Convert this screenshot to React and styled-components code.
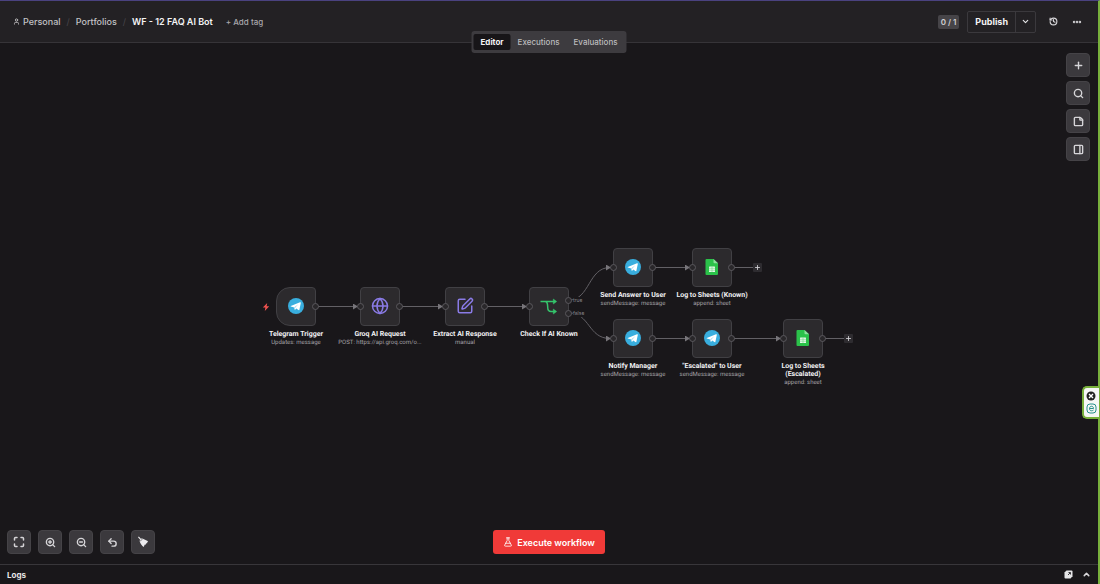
import React from "react";
import styled, { createGlobalStyle, css } from "styled-components";
import {
  ChevronDown, ChevronUp, Ellipsis, FlaskConical, Globe, History, Maximize, PanelRight,
  Plus, Search, SquarePen, StickyNote, Undo2, User, ZoomIn, ZoomOut,
} from "lucide-react";

const GlobalStyle = createGlobalStyle`
  * { box-sizing: border-box; }
  body { margin: 0; background: #19171a; }
  body, button { font-family: Inter, "Liberation Sans", sans-serif; }
  button { padding: 0; border: 0; background: none; color: inherit; cursor: pointer; }
  svg { display: block; flex: none; }
`;

const Page = styled.div`
  position: relative;
  display: flex;
  flex-direction: column;
  min-height: 100vh;
  border-top: 1px solid #4a4280;
  border-right: 2px solid #78b03c;
  background: #19171a;
  color: #e6e6e8;
`;

const Header = styled.header`
  position: relative;
  display: flex;
  align-items: center;
  justify-content: space-between;
  height: 42px;
  padding: 0 13px;
  background: #232124;
  border-bottom: 1px solid #363438;
`;

const Breadcrumbs = styled.nav`
  display: flex;
  align-items: center;
  gap: 6px;
  font-size: 9px;
  line-height: 12px;
  color: #48464b;
`;

const Crumb = styled.a`
  display: flex;
  align-items: center;
  gap: 3px;
  color: #c2c1c4;
  font-weight: 500;
  text-decoration: none;
`;

const Title = styled.h1`
  margin: 0;
  font-size: 9px;
  font-weight: 600;
  line-height: 12px;
  color: #f4f4f5;
`;

const AddTag = styled.button`
  margin-left: 7px;
  font-size: 8px;
  font-weight: 500;
  line-height: 12px;
  color: #a9a7ac;
`;

const HeaderActions = styled.div`
  display: flex;
  align-items: center;
  gap: 8px;
`;

const Counter = styled.span`
  padding: 0 3px;
  border-radius: 2px;
  background: #464448;
  font-size: 8px;
  font-weight: 600;
  line-height: 14px;
  color: #d0cfd2;
`;

const PublishGroup = styled.div`
  display: flex;
  height: 22px;
  margin-right: 1px;
  border: 1px solid #3b393d;
  border-radius: 2px;
`;

const PublishButton = styled.button`
  padding: 0 7px;
  font-size: 9px;
  font-weight: 700;
  color: #f4f4f5;
`;

const PublishMenu = styled.button`
  display: grid;
  place-items: center;
  width: 20px;
  border-left: 1px solid #3b393d;
`;

const PlainButton = styled.button`
  display: grid;
  place-items: center;
  width: 16px;
  height: 16px;
  color: #d8d7da;
`;

const Tabs = styled.div`
  position: absolute;
  top: 30px;
  left: 50%;
  z-index: 2;
  display: flex;
  padding: 3px 2px;
  border-radius: 3px;
  background: #3d3b3f;
  transform: translateX(-50%);
`;

const Tab = styled.button`
  height: 16px;
  padding: 0 7px;
  border-radius: 2px;
  font-size: 8px;
  font-weight: ${(p) => (p.$active ? 700 : 500)};
  line-height: 16px;
  color: ${(p) => (p.$active ? "#f4f4f5" : "#bcbbbe")};
  background: ${(p) => (p.$active ? "#171518" : "transparent")};
`;

const Canvas = styled.main`
  position: relative;
  display: flex;
  flex: 1;
  flex-direction: column;
  justify-content: space-between;
  min-height: 400px;
  overflow: hidden;
`;

const SquareButton = styled.button`
  display: grid;
  place-items: center;
  width: 24px;
  height: 24px;
  border: 1px solid #454347;
  border-radius: 4px;
  background: #3b393d;
  color: #d6d5d8;
`;

const SideTools = styled.div`
  position: relative;
  z-index: 1;
  display: flex;
  flex-direction: column;
  align-self: flex-end;
  gap: 4px;
  padding: 10px 8px 0 0;
`;

const BottomBar = styled.div`
  position: relative;
  z-index: 1;
  display: grid;
  grid-template-columns: 1fr auto 1fr;
  padding: 0 7px 10px;
`;

const ViewTools = styled.div`
  display: flex;
  gap: 7px;
`;

const ExecuteButton = styled.button`
  display: flex;
  align-items: center;
  gap: 4px;
  height: 24px;
  padding: 0 10px;
  border-radius: 3px;
  background: #f03a38;
  color: #fff;
  font-size: 9px;
  font-weight: 600;
`;

const Diagram = styled.div`
  position: absolute;
  top: 50%;
  left: 50%;
  width: 620px;
  height: 162px;
  transform: translate(-50%, -50%);
`;

const Wires = styled.svg`
  position: absolute;
  inset: 0;
  overflow: visible;
`;

const NodeBox = styled.div`
  position: absolute;
  left: ${(p) => p.$x}px;
  top: ${(p) => p.$y}px;
  display: grid;
  place-items: center;
  width: 40px;
  height: 39px;
  border: 1px solid #414044;
  border-radius: ${(p) => (p.$trigger ? "14px 4px 4px 14px" : "4px")};
  background: #2c2a2d;
`;

const NodeText = styled.div`
  position: absolute;
  top: 42px;
  left: 50%;
  width: ${(p) => (p.$narrow ? 56 : 84)}px;
  transform: translateX(-50%);
  font-family: Roboto, "Liberation Sans", sans-serif;
  text-align: center;
  text-rendering: geometricPrecision;
`;

const NodeName = styled.div`
  font-size: 7px;
  font-weight: 700;
  line-height: 8px;
  color: #f0f0f2;
`;

const NodeDetail = styled.div`
  font-size: 6px;
  line-height: 9px;
  color: #a3a1a6;
  white-space: nowrap;
`;

const Port = styled.span`
  position: absolute;
  top: ${(p) => p.$y}px;
  width: 7px;
  height: 7px;
  border: 1px solid #5a585d;
  border-radius: 50%;
  background: #29272a;
  ${(p) => (p.$side === "in" ? css`left: -4px;` : css`right: -4px;`)}
`;

const PortLabel = styled.span`
  position: absolute;
  left: 43px;
  top: ${(p) => p.$y}px;
  font-size: 5px;
  line-height: 7px;
  color: #88868b;
  background: #19171a;
`;

const AddNode = styled.button`
  position: absolute;
  left: ${(p) => p.$x}px;
  top: ${(p) => p.$y}px;
  display: grid;
  place-items: center;
  width: 9px;
  height: 9px;
  border-radius: 1px;
  background: #2e2c30;
  color: #d0cfd2;
`;

const TriggerMark = styled.svg`
  position: absolute;
  left: -15px;
  top: 15px;
`;

const LogsBar = styled.footer`
  display: flex;
  align-items: center;
  justify-content: space-between;
  height: 20px;
  padding: 0 4px 0 7px;
  border-top: 1px solid #38363a;
  font-size: 8px;
  font-weight: 700;
`;

const LogsActions = styled.div`
  display: flex;
  align-items: center;
  gap: 2px;
`;

const Widget = styled.aside`
  position: absolute;
  right: -1px;
  top: 385px;
  z-index: 3;
  display: flex;
  flex-direction: column;
  align-items: center;
  justify-content: space-around;
  width: 17px;
  height: 33px;
  padding: 2px 1px 2px 0;
  border: 2px solid #78b03c;
  border-right: 0;
  border-radius: 5px 0 0 5px;
  background: #f6f7f6;
`;

const TelegramIcon = () => (
  <svg width="16" height="16" viewBox="0 0 16 16" aria-hidden="true">
    <circle cx="8" cy="8" r="8" fill="#39aede" />
    <path d="M2.800 7.900 12 4.200c.6-.2 1 .1.800.8l-1.400 6.700c-.1.600-.6.700-1 .4L8.300 10.600l-1.100 1.100c-.3.300-.6.200-.6-.2L6.200 9.400 2.900 8.500c-.4-.1-.4-.4-.1-.6Z" fill="#fff" />
    <path d="m6.300 9.300 4-3-3.100 3.500-.4 1.500Z" fill="#9fd3ec" />
  </svg>
);

const SheetsIcon = () => (
  <svg width="14" height="18" viewBox="0 0 14 18" aria-hidden="true">
    <path d="M1.500 1h7L13 5.200V16a1 1 0 0 1-1 1H1.500a1 1 0 0 1-1-1V2a1 1 0 0 1 1-1Z" fill="#2bc24a" />
    <path d="M8.500 1 13 5.200H9.500a1 1 0 0 1-1-1Z" fill="#8fe09e" />
    <rect x="4" y="8.500" width="6" height="5.500" rx=".5" fill="#e9f9ec" />
    <path d="M4 10.300h6M4 12.200h6M7 8.500V14" stroke="#58cc70" strokeWidth=".5" />
  </svg>
);

const BranchIcon = () => (
  <svg width="18" height="18" viewBox="0 0 18 18" fill="none" stroke="#35c46c" strokeWidth="1.500" aria-hidden="true">
    <path d="M.5 4.500H15M5 4.500c3 0 2.500 3 2.700 6 .1 3 1 4 3.300 4h4" />
    <path d="m13.300 2 3.400 2.500L13.300 7ZM13.300 12l3.400 2.500-3.400 2.500Z" fill="#35c46c" strokeWidth=".5" />
  </svg>
);

const BroomIcon = () => (
  <svg width="12" height="12" viewBox="0 0 12 12" aria-hidden="true">
    <path d="M1 1.200 1.800.6l2.100 2.200c.7-.5 1.500-.4 2 0l5.300 2.500-1.100.9.400.7-1.500.5-.1 1.200-1.300.1-.8 2.300C4.800 9.700 3.300 7.700 2.700 5.500c-.1-.7.1-1.300.5-1.800Z" fill="#ecebee" />
    <path d="m3.100 5.100 2.500-2" stroke="#3b393d" strokeWidth=".6" />
  </svg>
);

const PopOutIcon = () => (
  <svg width="9" height="9" viewBox="0 0 9 9" aria-hidden="true">
    <path d="M2.500.5h5a1 1 0 0 1 1 1v4.700L6.500 8.500h-5a1 1 0 0 1-1-1v-5Z" fill="#e6e6e8" />
    <path d="M4.500 2.500h2v2M6.300 2.700 4 5" fill="none" stroke="#3a383c" />
  </svg>
);

const nodes = [
  { x: 37, y: 64, name: "Telegram Trigger", detail: "Updates: message", icon: <TelegramIcon />, trigger: true },
  { x: 121, y: 64, name: "Groq AI Request", detail: "POST: https://api.groq.com/o...", icon: <Globe size={18} color="#8a7be6" strokeWidth={2} /> },
  { x: 206, y: 64, name: "Extract AI Response", detail: "manual", icon: <SquarePen size={18} color="#8a7be6" strokeWidth={2} /> },
  { x: 290, y: 64, name: "Check If AI Known", icon: <BranchIcon />, branches: true },
  { x: 374, y: 25, name: "Send Answer to User", detail: "sendMessage: message", icon: <TelegramIcon /> },
  { x: 453, y: 25, name: "Log to Sheets (Known)", detail: "append: sheet", icon: <SheetsIcon /> },
  { x: 374, y: 96, name: "Notify Manager", detail: "sendMessage: message", icon: <TelegramIcon /> },
  { x: 453, y: 96, name: "\"Escalated\" to User", detail: "sendMessage: message", icon: <TelegramIcon /> },
  { x: 544, y: 96, name: "Log to Sheets (Escalated)", detail: "append: sheet", icon: <SheetsIcon />, narrow: true },
];

const wires = [
  "M77 83.500H118", "M161 83.500H203", "M246 83.500H287", "M414 44.500H450", "M414 115.500H450", "M493 115.500H541",
  "M330 77C351 77 349 44.500 371 44.500", "M330 90C351 90 349 115.500 371 115.500",
];
const tails = ["M493 44.500H515", "M584 115.500H606"];

function FlowNode({ x, y, name, detail, icon, trigger, branches, narrow }) {
  return (
    <NodeBox $x={x} $y={y} $trigger={trigger}>
      {trigger ? (
        <TriggerMark width="8" height="8" viewBox="0 0 8 8" aria-hidden="true">
          <path d="M5.200 0 .8 4.600h2.600L2.800 8l4.400-4.700H4.600Z" fill="#f0524f" />
        </TriggerMark>
      ) : (
        <Port $side="in" $y={15} />
      )}
      {icon}
      {branches ? (
        <>
          <Port $side="out" $y={9} />
          <Port $side="out" $y={22} />
          <PortLabel $y={9}>true</PortLabel>
          <PortLabel $y={22}>false</PortLabel>
        </>
      ) : (
        <Port $side="out" $y={15} />
      )}
      <NodeText $narrow={narrow}>
        <NodeName>{name}</NodeName>
        {detail && <NodeDetail>{detail}</NodeDetail>}
      </NodeText>
    </NodeBox>
  );
}

export default function App() {
  return (
    <Page>
      <GlobalStyle />
      <Header>
        <Breadcrumbs aria-label="Breadcrumb">
          <Crumb href="#personal"><User size={7} strokeWidth={3} />Personal</Crumb>
          <span>/</span>
          <Crumb href="#portfolios">Portfolios</Crumb>
          <span>/</span>
          <Title>WF - 12 FAQ AI Bot</Title>
          <AddTag>+ Add tag</AddTag>
        </Breadcrumbs>
        <HeaderActions>
          <Counter>0 / 1</Counter>
          <PublishGroup>
            <PublishButton>Publish</PublishButton>
            <PublishMenu aria-label="Publish options"><ChevronDown size={9} strokeWidth={3} /></PublishMenu>
          </PublishGroup>
          <PlainButton aria-label="History"><History size={9} strokeWidth={3} /></PlainButton>
          <PlainButton aria-label="More"><Ellipsis size={10} strokeWidth={4} /></PlainButton>
        </HeaderActions>
        <Tabs role="tablist">
          <Tab role="tab" aria-selected="true" $active>Editor</Tab>
          <Tab role="tab" aria-selected="false">Executions</Tab>
          <Tab role="tab" aria-selected="false">Evaluations</Tab>
        </Tabs>
      </Header>

      <Canvas>
        <Diagram>
          <Wires width="620" height="160" viewBox="0 0 620 160" fill="none" stroke="#626065">
            <defs>
              <marker id="arrow" markerWidth="5" markerHeight="6" refX="4" refY="3" orient="auto">
                <path d="M0 0 5 3 0 6Z" fill="#77757a" stroke="none" />
              </marker>
            </defs>
            {wires.map((d) => <path key={d} d={d} markerEnd="url(#arrow)" />)}
            {tails.map((d) => <path key={d} d={d} />)}
          </Wires>
          {nodes.map((n) => <FlowNode key={n.name} {...n} />)}
          <AddNode $x={514} $y={40} aria-label="Add node"><Plus size={7} strokeWidth={3} /></AddNode>
          <AddNode $x={605} $y={111} aria-label="Add node"><Plus size={7} strokeWidth={3} /></AddNode>
        </Diagram>

        <SideTools>
          <SquareButton aria-label="Add"><Plus size={11} strokeWidth={3} /></SquareButton>
          <SquareButton aria-label="Search"><Search size={11} strokeWidth={3} /></SquareButton>
          <SquareButton aria-label="Add note"><StickyNote size={11} strokeWidth={3} /></SquareButton>
          <SquareButton aria-label="Toggle panel"><PanelRight size={11} strokeWidth={3} /></SquareButton>
        </SideTools>

        <BottomBar>
          <ViewTools>
            <SquareButton aria-label="Fit view"><Maximize size={12} strokeWidth={3} /></SquareButton>
            <SquareButton aria-label="Zoom in"><ZoomIn size={11} strokeWidth={3} /></SquareButton>
            <SquareButton aria-label="Zoom out"><ZoomOut size={11} strokeWidth={3} /></SquareButton>
            <SquareButton aria-label="Undo"><Undo2 size={11} strokeWidth={3} /></SquareButton>
            <SquareButton aria-label="Tidy up"><BroomIcon /></SquareButton>
          </ViewTools>
          <ExecuteButton><FlaskConical size={10} strokeWidth={2} />Execute workflow</ExecuteButton>
        </BottomBar>
      </Canvas>

      <LogsBar>
        <span>Logs</span>
        <LogsActions>
          <PlainButton aria-label="Pop out"><PopOutIcon /></PlainButton>
          <PlainButton aria-label="Open logs"><ChevronUp size={9} strokeWidth={4} /></PlainButton>
        </LogsActions>
      </LogsBar>

      <Widget>
        <svg width="10" height="10" viewBox="0 0 10 10" aria-hidden="true">
          <circle cx="5" cy="5" r="4.500" fill="#222" />
          <path d="m3 3 4 4m0-4L3 7" stroke="#fff" strokeWidth="1.400" />
        </svg>
        <svg width="11" height="11" viewBox="0 0 11 11" fill="none" stroke="#258f8b" aria-hidden="true">
          <rect x="1" y="1" width="9" height="9" rx="3" />
          <path d="M3.500 5.500h4c0-3-4-3-4 0s3 2.500 4 1.500" />
        </svg>
      </Widget>
    </Page>
  );
}
